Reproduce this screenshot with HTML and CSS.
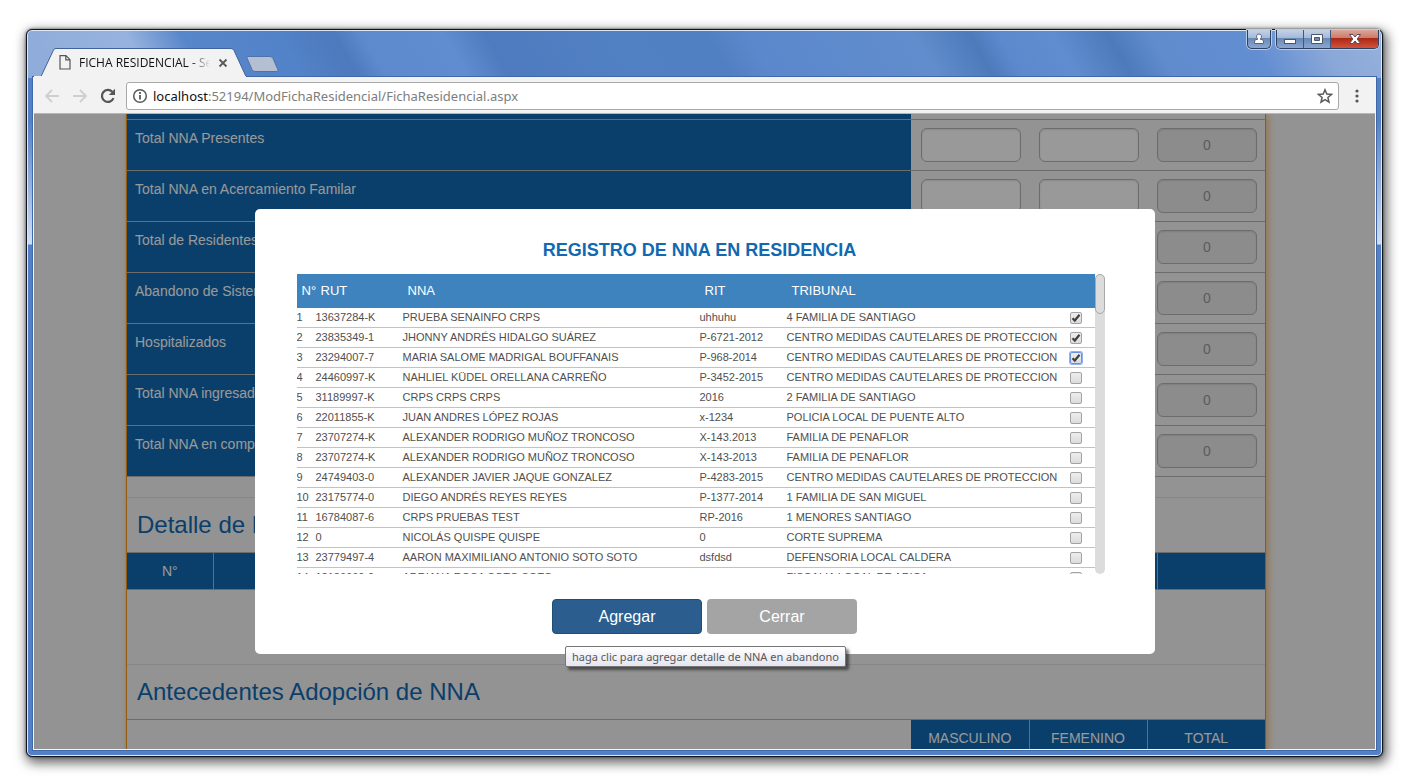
FILE: index.html
```html
<!DOCTYPE html>
<html lang="es">
<head>
<meta charset="utf-8">
<title>FICHA RESIDENCIAL - Senainfo</title>
<link rel="stylesheet" href="styles.css">
</head>
<body>
<div class="window">
  <header class="titlebar">
    <div class="tabs">
      <div class="tab">
        <svg class="tab-shape" viewBox="0 0 214 29" preserveAspectRatio="none" aria-hidden="true"><path d="M0 28.5 H7 L19.500 2 Q20 .5 22 .5 H197 Q199 .5 200 2.500 L212 28.500" fill="#f2f2f2" stroke="#41639b"/><path d="M0 28.500H212" stroke="#f2f2f2"/></svg>
        <div class="tab-body">
          <svg class="page-icon" width="12" height="15" viewBox="0 0 12 15" aria-hidden="true"><path d="M1 .7h6l4 4v9.300H1z M6.800 .7v4.200H11" fill="none" stroke="#555" stroke-width="1.200"/></svg>
          <span class="tab-title">FICHA RESIDENCIAL - Sen</span>
          <button class="tab-close" aria-label="Cerrar pestaña"><svg width="10" height="10" viewBox="0 0 10 10"><path d="M1.500 1.500l7 7M8.500 1.500l-7 7" stroke="#5a5a5a" stroke-width="1.800"/></svg></button>
        </div>
      </div>
      <button class="new-tab" aria-label="Nueva pestaña"><svg width="36" height="18" viewBox="0 0 36 18"><path d="M3 1.500h22q2 0 3 2l5 11.500q.6 1.500-1 1.500H10q-2 0-3-2L2 3q-.500-1.500 1-1.500z" fill="#b4bfd1" stroke="#4e73aa"/></svg></button>
    </div>
    <div class="caption">
      <button class="cap user" aria-label="Usuario"><svg width="12" height="12" viewBox="0 0 12 12"><path d="M6 1a2.500 2.500 0 0 1 1.500 4.500v1H9q1.500.5 1.500 2.500v1.500h-9V9q0-2 1.500-2.500h1.500v-1A2.500 2.500 0 0 1 6 1z" fill="#fff" stroke="#59647a"/></svg></button>
      <div class="cap-group">
        <button class="cap" aria-label="Minimizar"><svg width="14" height="12" viewBox="0 0 14 12"><rect x="1.500" y="6.500" width="11" height="4" fill="#fff" stroke="#4c5669"/></svg></button>
        <button class="cap" aria-label="Maximizar"><svg width="14" height="12" viewBox="0 0 14 12"><path d="M1.500 1.500h11v9h-11z M4.500 4.500v3h5v-3z" fill="#fff" fill-rule="evenodd" stroke="#4c5669"/></svg></button>
        <button class="cap close" aria-label="Cerrar ventana"><svg width="14" height="12" viewBox="0 0 14 12"><path d="M1.500 1.500h3.500l2 2.500 2-2.500h3.500L9.200 6l3.300 4.500H9L7 8l-2 2.500H1.500L4.800 6z" fill="#fff" stroke="#5b4b58"/></svg></button>
      </div>
    </div>
  </header>
  <div class="client">
    <div class="toolbar">
      <button class="nav" aria-label="Atrás"><svg width="16" height="16" viewBox="0 0 16 16"><path d="M15 8H2M8 2L2 8l6 6" fill="none" stroke="#cfcfcf" stroke-width="1.800"/></svg></button>
      <button class="nav" aria-label="Adelante"><svg width="16" height="16" viewBox="0 0 16 16"><path d="M1 8h13M8 2l6 6-6 6" fill="none" stroke="#cfcfcf" stroke-width="1.800"/></svg></button>
      <button class="nav" aria-label="Recargar"><svg width="16" height="16" viewBox="0 0 16 16"><path d="M13.500 10.200A6 6 0 1 1 12.300 3.800" fill="none" stroke="#555" stroke-width="2.200"/><path d="M15 .8V7H8.800z" fill="#555"/></svg></button>
      <div class="omnibox">
        <svg width="16" height="16" viewBox="0 0 16 16" aria-hidden="true"><circle cx="8" cy="8" r="6.300" fill="none" stroke="#5a5a5a" stroke-width="1.500"/><path d="M8 7v4.500M8 4v2" stroke="#5a5a5a" stroke-width="1.800"/></svg>
        <a class="url" href="#"><b>localhost</b>:52194/ModFichaResidencial/FichaResidencial.aspx</a>
        <button class="star" aria-label="Favorito"><svg width="16" height="16" viewBox="0 0 16 16"><path d="M8 1.800l1.800 4.300 4.700.4-3.600 3 1.100 4.600L8 11.700l-4 2.400 1.100-4.600-3.600-3 4.700-.4z" fill="none" stroke="#5a5a5a" stroke-width="1.500"/></svg></button>
      </div>
      <button class="menu" aria-label="Menú"><svg width="4" height="14" viewBox="0 0 4 14"><g fill="#555"><circle cx="2" cy="2" r="1.600"/><circle cx="2" cy="7" r="1.600"/><circle cx="2" cy="12" r="1.600"/></g></svg></button>
    </div>
    <div class="viewport">
      <main class="page">
        <table class="totals">
          <tbody id="totals"></tbody>
        </table>
        <section class="detail">
          <h2>Detalle de NNA en abandono</h2>
          <table class="detail-table"><thead><tr><th class="num">N°</th><th></th><th class="act"></th></tr></thead></table>
        </section>
        <section class="adoption">
          <h2>Antecedentes Adopción de NNA</h2>
          <table class="adoption-table"><thead><tr><td></td><th>MASCULINO</th><th>FEMENINO</th><th>TOTAL</th></tr></thead></table>
        </section>
      </main>
      <div class="backdrop">
        <div class="modal" role="dialog" aria-labelledby="dlg-title">
          <h1 id="dlg-title">REGISTRO DE NNA EN RESIDENCIA</h1>
          <div class="list">
            <div class="list-scroll">
              <table class="people">
                <colgroup><col class="c-n"><col class="c-rut"><col class="c-nna"><col class="c-rit"><col><col class="c-chk"></colgroup>
                <thead><tr><th>N°</th><th>RUT</th><th>NNA</th><th>RIT</th><th>TRIBUNAL</th><th></th></tr></thead>
                <tbody id="people"></tbody>
              </table>
            </div>
            <div class="track"><div class="thumb"></div></div>
          </div>
          <div class="actions">
            <div class="tip-host">
              <button class="btn primary" aria-describedby="tip">Agregar</button>
              <div class="tooltip" id="tip" role="tooltip">haga clic para agregar detalle de NNA en abandono</div>
            </div>
            <button class="btn muted">Cerrar</button>
          </div>
        </div>
      </div>
    </div>
  </div>
</div>
<script src="app.js"></script>
</body>
</html>
```
FILE: styles.css
```css
* { box-sizing: border-box; }
html, body { height: 100%; }
body {
  margin: 0;
  padding: 29px 38px 27px 26px;
  background: #fff;
  font-family: "Liberation Sans", Arial, sans-serif;
  overflow: hidden;
}
button { font: inherit; padding: 0; border: 0; background: none; display: flex; align-items: center; justify-content: center; }
table { border-collapse: collapse; width: 100%; table-layout: fixed; }
th, td { padding: 0; font-weight: normal; text-align: left; }
h1, h2 { margin: 0; }

.window {
  height: 100%;
  display: flex;
  flex-direction: column;
  padding: 0 6px 6px;
  border: 1px solid #10131c;
  border-radius: 6px;
  background:
    linear-gradient(to bottom, rgba(216,227,243,0) 90px, rgba(216,227,243,.95) 214px, rgba(216,227,243,0) 215px) left / 6px 100% no-repeat,
    linear-gradient(to bottom, rgba(216,227,243,0) 90px, rgba(216,227,243,.95) 214px, rgba(216,227,243,0) 215px) right / 6px 100% no-repeat,
    linear-gradient(60deg, #8eabd9 0, #97b2de 9%, #5886ca 13%, #5282c8 20%, #4d79bd 24%, #5d8acd 26%, #608dcf 32%, #4e7bbf 35%, #5180c3 44%, #5180c2 51%, #5b88cc 54%, #618dcd 66%, #4d7aba 70%, #5c89cd 72%, #608dcf 76%, #4d7aba 80%, #608ccd 83%, #628ed2 90%, #89a7d8 95%, #96b1dc 100%) top / 100% 48px no-repeat,
    #5481c5;
  box-shadow: inset 0 0 0 1px #dce8f6, 0 0 3px rgba(0,0,0,.6), 2px 4px 12px 2px rgba(0,0,0,.6);
}

.titlebar { flex: none; height: 47px; display: flex; justify-content: space-between; }
.tabs { display: flex; align-items: flex-end; padding-left: 1px; }
.tab { position: relative; width: 214px; height: 29px; }
.tab-shape { position: absolute; inset: 0; width: 100%; height: 100%; }
.tab-body { position: relative; display: flex; align-items: center; height: 100%; padding-left: 25px; gap: 8px; }
.tab-title {
  width: 131px; overflow: hidden; white-space: nowrap;
  font: 12px "Open Sans", "Noto Sans", sans-serif; color: #111;
  -webkit-mask-image: linear-gradient(to right, #000 112px, transparent 131px);
  mask-image: linear-gradient(to right, #000 112px, transparent 131px);
}
.tab-close { width: 10px; }
.new-tab { height: 18px; margin-bottom: 4px; margin-left: -3px; }

.caption { display: flex; align-items: flex-start; gap: 5px; margin-right: -3px; }
.cap { width: 27px; height: 18px; background: linear-gradient(#c3d2e8 0, #a4b8d6 45%, #6a88b6 46%, #8ba7d0 100%); border-right: 1px solid #40577e; }
.cap-group { display: flex; }
.user, .cap-group { border: 1px solid #2e405f; border-top: 0; border-radius: 0 0 5px 5px; overflow: hidden; box-shadow: 0 0 0 1px #b8cbe7; }
.user { width: 24px; height: 19px; }
.close { width: 47px; border-right: 0; background: linear-gradient(#dba69b 0, #cd7a69 45%, #ab2814 46%, #d4523a 100%); }

.client { flex: 1; min-height: 0; display: flex; flex-direction: column; border: 1px solid #f2f5fa; border-top: 1px solid #f2f2f2; outline: 1px solid #4068a8; }
.toolbar { flex: none; height: 36px; display: flex; align-items: center; background: #f2f2f2; border-bottom: 1px solid #b6b6b6; padding: 0 14px 0 10px; }
.nav { width: 16px; margin-right: 12px; }
.omnibox { flex: 1; min-width: 0; height: 28px; margin: 0 14px 0 -2px; padding: 0 5px; display: flex; align-items: center; gap: 5px; background: #fff; border: 1px solid #a9a9a9; border-radius: 3px; }
.url { flex: 1; font: 13px "Noto Sans", "Open Sans", sans-serif; color: #7d7d7d; text-decoration: none; white-space: nowrap; }
.url b { font-weight: normal; color: #111; }
.menu { width: 8px; }

.viewport { position: relative; flex: 1; min-height: 0; overflow: hidden; background: #f5f5f5; padding-right: 17px; }
.page { max-width: 1140px; min-height: 100%; margin: 0 auto; border: solid #f3981e; border-width: 0 1px; box-shadow: 4px 0 6px -1px rgba(243,152,30,.45), -1px 0 3px rgba(243,152,30,.25); }

.totals { margin-top: 5px; }
.totals tr { border-top: 1px solid #b5b5b5; border-bottom: 1px solid #b5b5b5; height: 51px; }
.totals th { background: #1169b2; color: #fff; font-size: 14px; line-height: 20px; padding: 8px 8px; vertical-align: top; }
.totals td { width: 118px; padding: 0 8px 0 10px; vertical-align: middle; }
.lead { height: 5px; background: linear-gradient(to right, #1169b2 calc(100% - 354px), transparent 0); margin-bottom: -5px; }
.field { display: block; width: 100%; height: 34px; border: 1px solid #b5b5b5; border-radius: 6px; background: #fff; box-shadow: inset 0 1px 2px rgba(0,0,0,.1); font: 14px "Liberation Sans", Arial, sans-serif; text-align: center; color: #999; }
.field:disabled { background: #eaeaea; }

.detail { margin-top: 20px; border-top: 1px solid #dfdfdf; }
h2 { font-size: 24px; line-height: 54px; font-weight: normal; color: #1169b2; padding-left: 10px; }
.detail-table th, .adoption-table th { background: #1169b2; color: #fff; height: 37px; font-size: 14px; text-align: center; border: 1px solid #b5b5b5; }
.detail-table tr th:first-child { border-left: 0; }
.detail-table tr th:last-child, .adoption-table tr th:last-child { border-right: 0; }
.num { width: 86px; }
.act { width: 108px; }
.adoption { margin-top: 74px; border-top: 1px solid #dfdfdf; }
.adoption-table tr { border-top: 1px solid #b5b5b5; }
.adoption-table th { width: 118px; }
.adoption-table td + th { border-left: 0; }

.backdrop { position: absolute; inset: 0; background: rgba(0,0,0,.4); display: flex; justify-content: center; align-items: flex-start; padding-top: 95px; }
.modal { width: 900px; max-width: 95%; background: #fff; border-radius: 5px; padding: 30px 50px 20px 42px; }
.modal h1 { font-size: 18px; line-height: 22px; text-align: center; color: #1169b2; padding-right: 2px; }
.list { display: flex; height: 300px; margin-top: 13px; }
.list-scroll { flex: 1; overflow: hidden; }
.track { width: 10px; background: #dcdcdc; border-radius: 5px; }
.thumb { height: 40px; border: 1px solid #a9a9a9; border-radius: 5px; background: #dcdcdc; }
.people { border-collapse: separate; border-spacing: 0; }
.people thead th { height: 34px; padding: 0 0 2px 5px; background: #3e83bd; color: #fff; font-size: 13px; white-space: nowrap; }
.people td { height: 20px; border-bottom: 1px solid #b9c6c6; font-size: 11px; line-height: 18px; color: #4f4f4f; white-space: nowrap; vertical-align: top; }
.c-n { width: 19px; }
.c-rut, .c-rit { width: 87px; }
.c-nna { width: 297px; }
.c-chk { width: 25px; }
.chk { appearance: none; display: block; width: 12px; height: 12px; margin: 4px 0 0; border: 1px solid #a3a3a3; border-radius: 2px; background: linear-gradient(#ededed, #dcdcdc); }
.chk:checked { background: url("data:image/svg+xml,%3Csvg xmlns='http://www.w3.org/2000/svg' viewBox='0 0 10 10'%3E%3Cpath d='M1.500 5.200l2.300 2.300L8.500 1.800' fill='none' stroke='%23404040' stroke-width='2.200'/%3E%3C/svg%3E") center / 10px 10px no-repeat, linear-gradient(#ededed, #dcdcdc); }
.chk.focused { border-color: #6b92dc; box-shadow: 0 0 0 1px #8db2f5; }

.actions { display: flex; justify-content: center; gap: 5px; margin-top: 25px; padding-left: 8px; }
.tip-host { position: relative; }
.btn { width: 150px; height: 35px; border-radius: 4px; font-size: 16px; color: #fff; }
.primary { background: #2b5e8e; border: 1px solid #204d74; }
.muted { background: #a4a4a4; }
.tooltip { position: absolute; top: 47px; left: 13px; height: 21px; padding: 0 6px; border: 1px solid #767676; border-radius: 2px; background: linear-gradient(#fff, #e4e5f0); box-shadow: 3px 3px 3px rgba(0,0,0,.5); font: 11px/19px "Noto Sans", "Open Sans", sans-serif; color: #575757; white-space: nowrap; }
```
FILE: app.js
```js
const totals = ["Total NNA Presentes", "Total NNA en Acercamiento Familar", "Total de Residentes", "Abandono de Sistema", "Hospitalizados", "Total NNA ingresados", "Total NNA en complejidad"];
document.getElementById("totals").innerHTML = totals.map(t => `
  <tr><th scope="row">${t}</th>
  <td><input class="field" aria-label="${t}, masculino"></td>
  <td><input class="field" aria-label="${t}, femenino"></td>
  <td><input class="field" aria-label="${t}, total" value="0" disabled></td></tr>`).join("");
const lead = document.createElement("div");
lead.className = "lead";
document.querySelector(".page").prepend(lead);

const people = [
  ["13637284-K", "PRUEBA SENAINFO CRPS", "uhhuhu", "4 FAMILIA DE SANTIAGO", "checked"],
  ["23835349-1", "JHONNY ANDRÉS HIDALGO SUÁREZ", "P-6721-2012", "CENTRO MEDIDAS CAUTELARES DE PROTECCION", "checked"],
  ["23294007-7", "MARIA SALOME MADRIGAL BOUFFANAIS", "P-968-2014", "CENTRO MEDIDAS CAUTELARES DE PROTECCION", "checked"],
  ["24460997-K", "NAHLIEL KÜDEL ORELLANA CARREÑO", "P-3452-2015", "CENTRO MEDIDAS CAUTELARES DE PROTECCION", ""],
  ["31189997-K", "CRPS CRPS CRPS", "2016", "2 FAMILIA DE SANTIAGO", ""],
  ["22011855-K", "JUAN ANDRES LÓPEZ ROJAS", "x-1234", "POLICIA LOCAL DE PUENTE ALTO", ""],
  ["23707274-K", "ALEXANDER RODRIGO MUÑOZ TRONCOSO", "X-143.2013", "FAMILIA DE PENAFLOR", ""],
  ["23707274-K", "ALEXANDER RODRIGO MUÑOZ TRONCOSO", "X-143-2013", "FAMILIA DE PENAFLOR", ""],
  ["24749403-0", "ALEXANDER JAVIER JAQUE GONZALEZ", "P-4283-2015", "CENTRO MEDIDAS CAUTELARES DE PROTECCION", ""],
  ["23175774-0", "DIEGO ANDRÉS REYES REYES", "P-1377-2014", "1 FAMILIA DE SAN MIGUEL", ""],
  ["16784087-6", "CRPS PRUEBAS TEST", "RP-2016", "1 MENORES SANTIAGO", ""],
  ["0", "NICOLÁS QUISPE QUISPE", "0", "CORTE SUPREMA", ""],
  ["23779497-4", "AARON MAXIMILIANO ANTONIO SOTO SOTO", "dsfdsd", "DEFENSORIA LOCAL CALDERA", ""],
  ["12186660-9", "ADRIANA ROSA SOTO SOTO", "", "FISCALIA LOCAL DE ARICA", ""]
];
document.getElementById("people").innerHTML = people.map((p, i) => `
  <tr><td>${i + 1}</td><td>${p[0]}</td><td>${p[1]}</td><td>${p[2]}</td><td>${p[3]}</td>
  <td><input type="checkbox" class="chk${i === 2 ? " focused" : ""}" aria-label="Seleccionar ${p[1]}" ${p[4]}></td></tr>`).join("");
```
